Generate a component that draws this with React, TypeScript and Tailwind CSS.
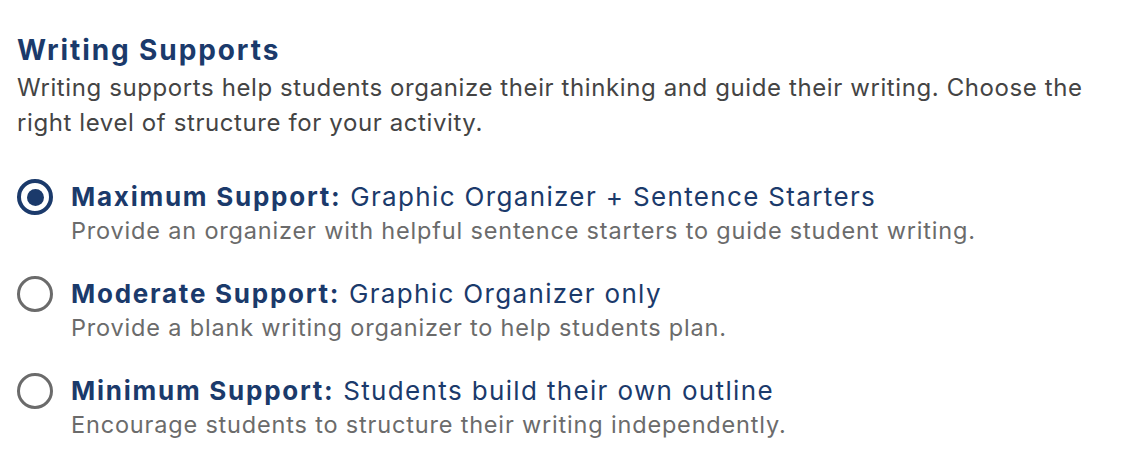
import { useState } from 'react';

const options = [
  {
    id: 'max',
    label: 'Maximum Support:',
    detail: 'Graphic Organizer + Sentence Starters',
    description: 'Provide an organizer with helpful sentence starters to guide student writing.',
  },
  {
    id: 'mod',
    label: 'Moderate Support:',
    detail: 'Graphic Organizer only',
    description: 'Provide a blank writing organizer to help students plan.',
  },
  {
    id: 'min',
    label: 'Minimum Support:',
    detail: 'Students build their own outline',
    description: 'Encourage students to structure their writing independently.',
  },
];

export default function App() {
  const [selected, setSelected] = useState('max');

  return (
    <div className="min-h-screen bg-white px-[17px] pt-[30px] font-['Inter',sans-serif]">
      <h2 className="text-[28px] font-bold leading-[40px] tracking-[1.9px] text-[#1b3a6b]">Writing Supports</h2>
      <p className="max-w-[1090px] text-[24px] leading-[35px] tracking-[0.6px] text-[#444444]">
        Writing supports help students organize their thinking and guide their writing. Choose the right level of
        structure for your activity.
      </p>

      <div className="mt-[40px] flex flex-col gap-[29px]">
        {options.map((opt) => {
          const checked = selected === opt.id;
          return (
            <label key={opt.id} className="flex cursor-pointer items-start gap-[18px]" onClick={() => setSelected(opt.id)}>
              <span
                className={`mt-[-1px] flex h-[36px] w-[36px] shrink-0 items-center justify-center rounded-full ${
                  checked ? 'border-4 border-[#1b3a6b]' : 'border-[3.5px] border-[#6b6b6b]'
                }`}
              >
                {checked && <span className="h-[17px] w-[17px] rounded-full bg-[#1b3a6b]" />}
              </span>
              <span className="flex flex-col">
                <span className="text-[26px] leading-[34px] tracking-[1.35px] text-[#1b3a6b]">
                  <span className="font-bold tracking-[1.75px]">{opt.label}</span> {opt.detail}
                </span>
                <span className="text-[23.5px] leading-[34px] tracking-[0.82px] text-[#6b6b6b]">{opt.description}</span>
              </span>
            </label>
          );
        })}
      </div>
    </div>
  );
}
